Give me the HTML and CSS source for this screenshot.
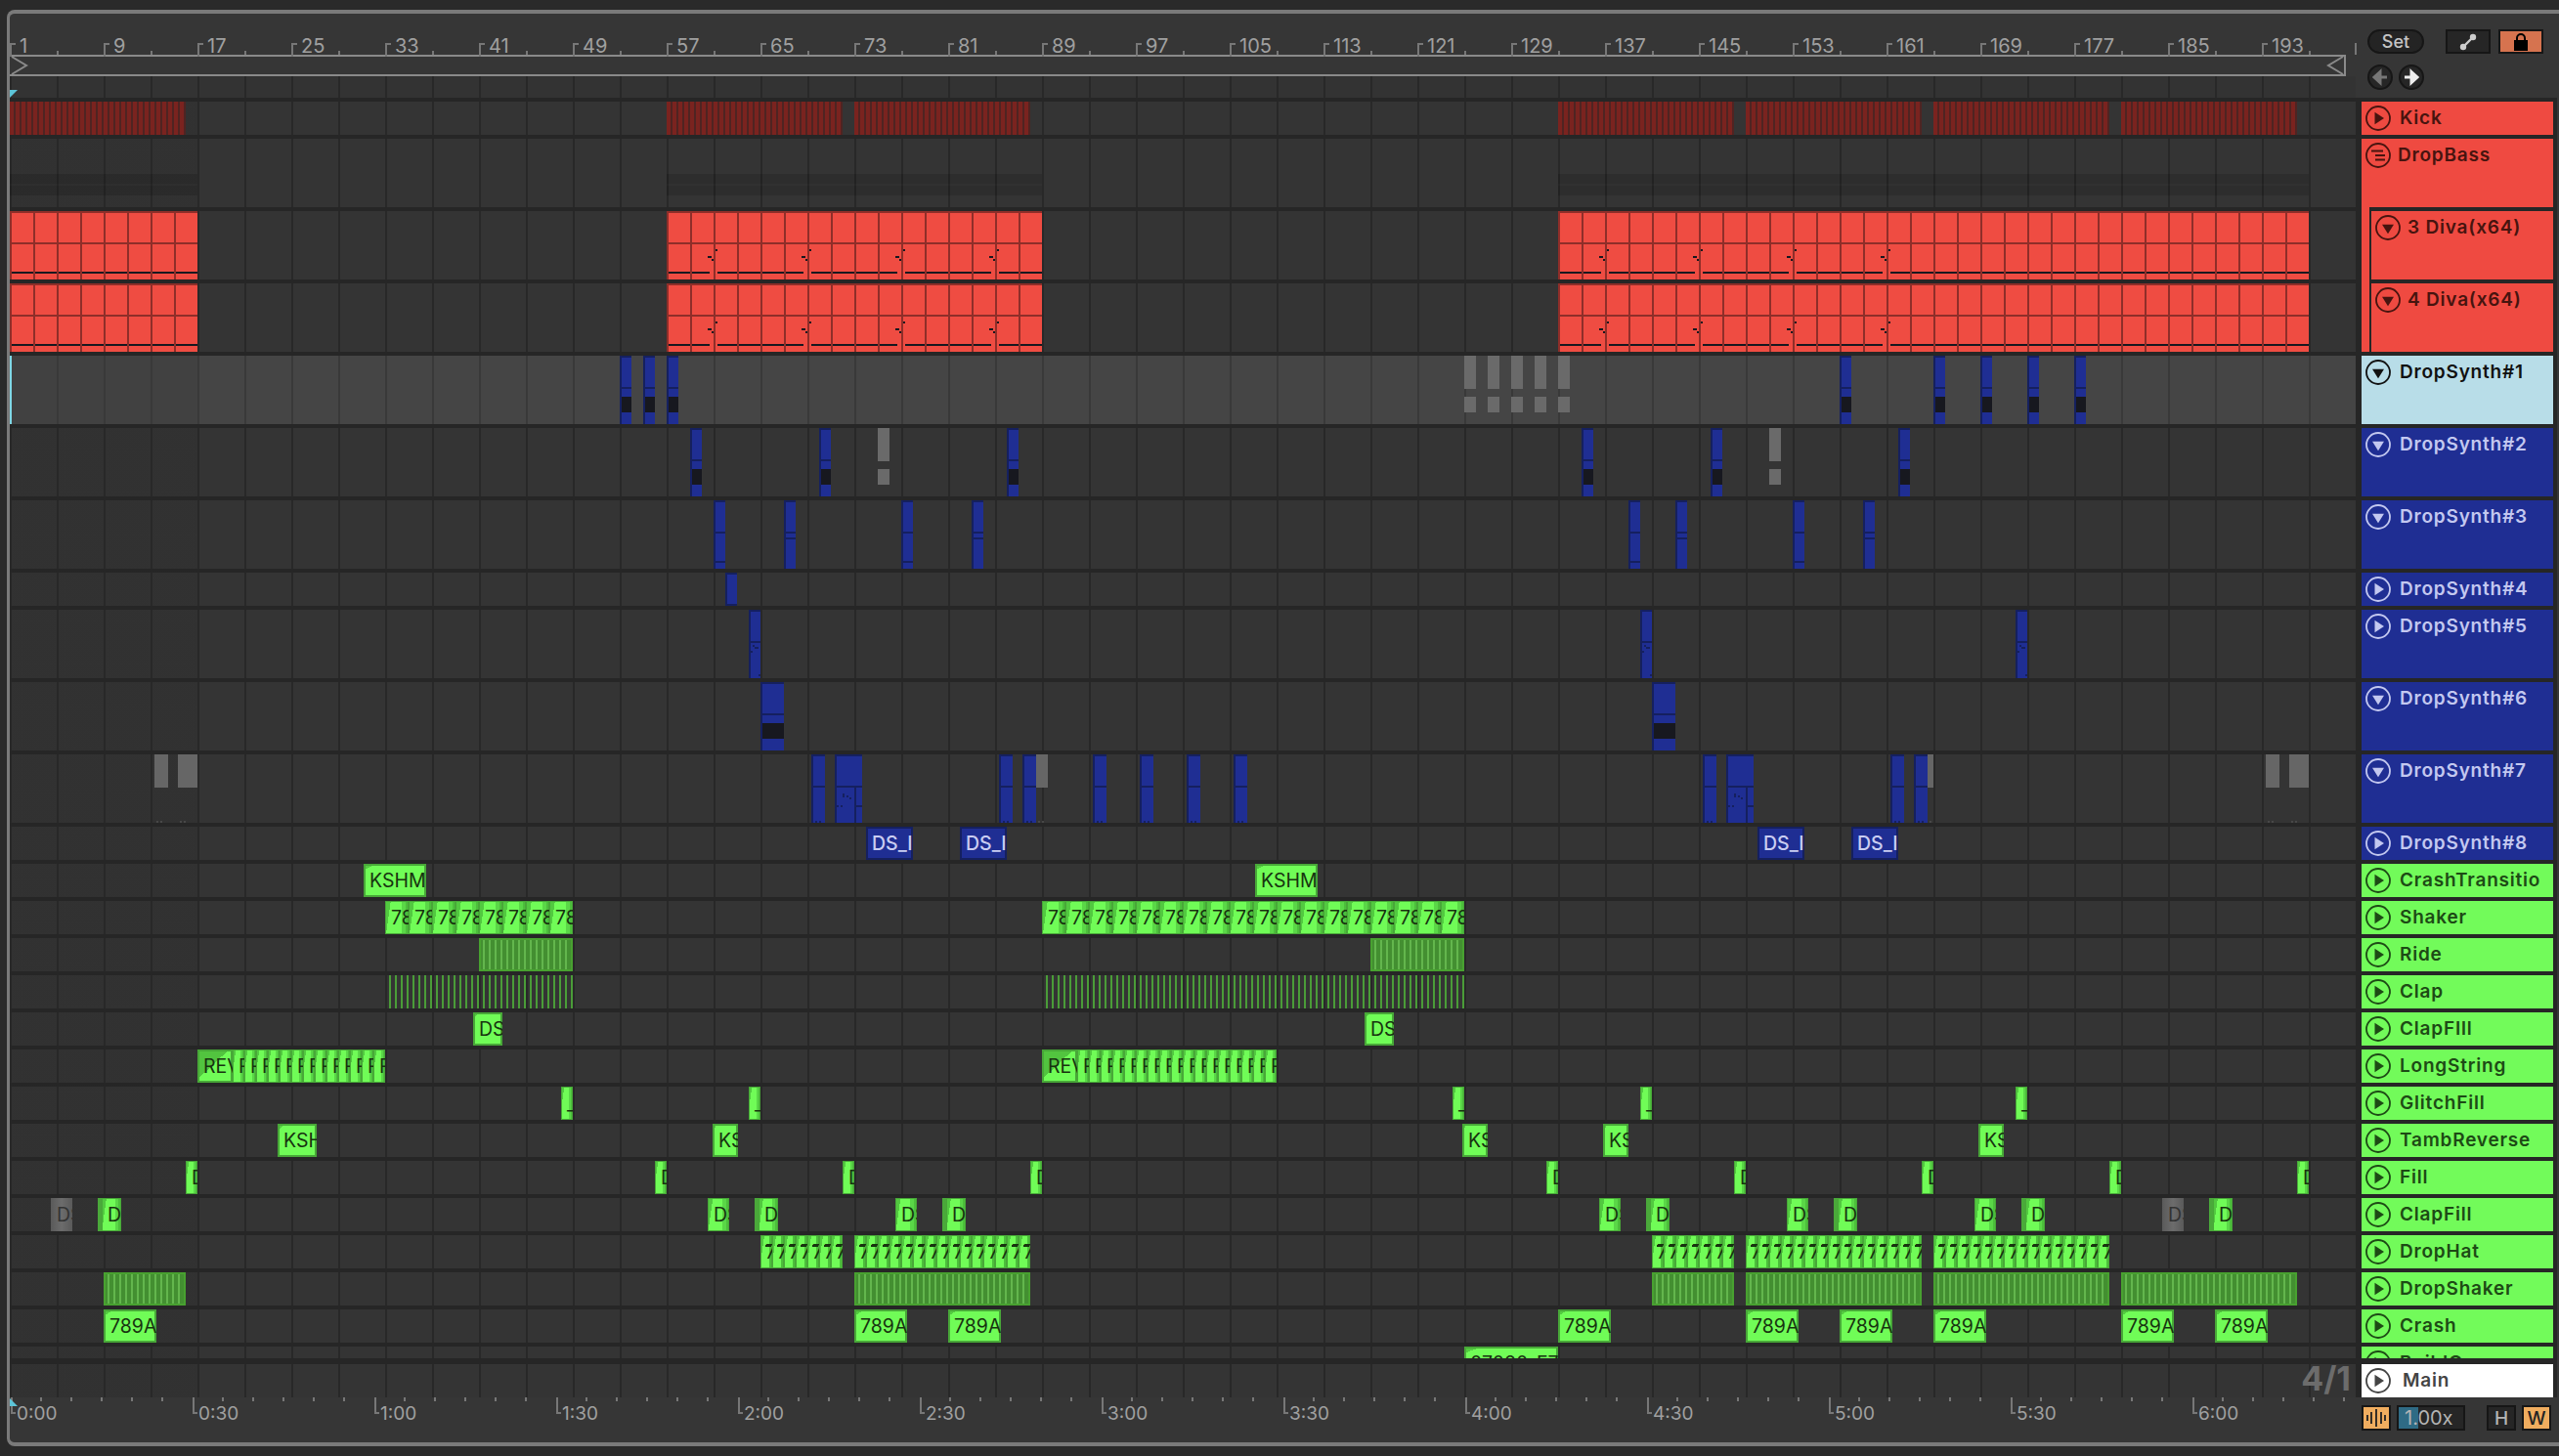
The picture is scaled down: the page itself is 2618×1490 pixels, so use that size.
FILE: index.html
```html
<!DOCTYPE html>
<html lang="en">
<head>
  <meta charset="UTF-8">
  <title>Arrangement View</title>
  <link rel="stylesheet" href="styles.css">
</head>
<body>
  <svg class="sprite">
    <symbol id="i-play" viewBox="0 0 26 26">
      <circle cx="13" cy="13" r="12" fill="none" stroke="currentColor" stroke-width="1.8"/>
      <path d="M9.5 6.8 L19 13 L9.5 19.2 Z" fill="currentColor"/>
    </symbol>
    <symbol id="i-down" viewBox="0 0 26 26">
      <circle cx="13" cy="13" r="12" fill="none" stroke="currentColor" stroke-width="1.8"/>
      <path d="M7 9.7 H19 L13 19.2 Z" fill="currentColor"/>
    </symbol>
    <symbol id="i-fold" viewBox="0 0 26 26">
      <circle cx="13" cy="13" r="12" fill="none" stroke="currentColor" stroke-width="1.8"/>
      <path d="M6 8.5 H18 M10 13 H20 M10 17.5 H20" fill="none" stroke="currentColor" stroke-width="1.8"/>
    </symbol>
  </svg>

  <div class="frame">
    <div class="top">
      <div class="arranger-head">
        <div class="ruler" id="barRuler"></div>
        <div class="loop">
          <svg class="loop-start" width="18" height="20" viewBox="0 0 18 20"><path d="M1 1 L16 10 L1 19" fill="none" stroke="#8a8a8a" stroke-width="2"/></svg>
          <svg class="loop-end" width="18" height="20" viewBox="0 0 18 20"><path d="M17 1 L2 10 L17 19" fill="none" stroke="#8a8a8a" stroke-width="2"/></svg>
        </div>
        <div class="pre-lane"><span class="marker marker-top"></span></div>
      </div>
      <div class="controls">
        <div class="controls-row">
          <button class="pill">Set</button>
          <button class="square first">
            <svg width="20" height="20" viewBox="0 0 20 20"><path d="M5 15 L15 5" stroke="#ccc" stroke-width="2.4"/><circle cx="5" cy="15" r="3.2" fill="#ccc"/><circle cx="15" cy="5" r="3.2" fill="#ccc"/></svg>
          </button>
          <button class="square lock">
            <svg width="20" height="20" viewBox="0 0 20 20"><rect x="3" y="8" width="14" height="11" fill="#000"/><path d="M6 8 V6 a4 4 0 0 1 8 0 V8" fill="none" stroke="#000" stroke-width="2"/></svg>
          </button>
        </div>
        <div class="controls-row nav">
          <button class="round">
            <svg width="18" height="18" viewBox="0 0 18 18"><path d="M16 9 H6 M9 3.5 L3 9 L9 14.5 Z" stroke="#777" stroke-width="3" fill="#777"/></svg>
          </button>
          <button class="round">
            <svg width="18" height="18" viewBox="0 0 18 18"><path d="M2 9 H12 M9 3.5 L15 9 L9 14.5 Z" stroke="#eee" stroke-width="3" fill="#eee"/></svg>
          </button>
        </div>
      </div>
    </div>

    <div class="tracks" id="tracks"></div>

    <div class="track master">
      <div class="lane main-lane"><span class="signature">4/1</span></div>
      <div class="header white">
        <svg class="icon"><use href="#i-play"/></svg>
        <span class="name main-name">Main</span>
      </div>
    </div>

    <div class="bottom">
      <div class="time-ruler" id="timeRuler"><span class="marker marker-bottom"></span></div>
      <div class="footer">
        <button class="foot-btn wave">
          <svg width="22" height="20" viewBox="0 0 22 20"><path d="M2 7 V13 M6 4 V16 M11 1 V19 M16 4 V16 M20 7 V13" stroke="#222" stroke-width="1.8"/></svg>
        </button>
        <div class="zoom-box"><span class="zoom-fill"></span><span class="zoom-text">1.00x</span></div>
        <button class="foot-btn letter first">H</button>
        <button class="foot-btn letter on">W</button>
      </div>
    </div>
  </div>

  <script src="script.js"></script>
</body>
</html>
```

FILE: styles.css
```css
* { box-sizing: border-box; }

body {
  margin: 0;
  width: 2618px;
  height: 1490px;
  padding: 10px 0 0 7px;
  background: #2a2a2a;
  overflow: hidden;
  font-family: "Inter", "Liberation Sans", sans-serif;
}

.sprite { display: none; }

button {
  font-family: inherit;
  padding: 0;
  display: flex;
  align-items: center;
  justify-content: center;
}

/* Outer frame */
.frame {
  width: 2611px;
  height: 1470px;
  border: solid #7a7a7a;
  border-width: 4px 0 4px 3px;
  border-radius: 8px 0 0 8px;
  background: #363636;
  overflow: hidden;
  display: flex;
  flex-direction: column;
}

/* Top: bar ruler, loop brace, controls */
.top {
  display: flex;
  height: 86px;
  flex: none;
}
.arranger-head { width: 2400px; flex: none; }

.ruler {
  display: flex;
  height: 42px;
  position: relative;
}
.ruler::after {
  content: "";
  position: absolute;
  left: 2399px;
  top: 30px;
  width: 2px;
  height: 12px;
  background: #777;
}
.bar-cell {
  width: 96px;
  flex: none;
  position: relative;
  padding: 21px 0 0 10px;
  color: #a0a0a0;
  font-size: 20px;
  line-height: 24px;
}
.bar-cell::before {
  content: "";
  position: absolute;
  left: 0;
  top: 30px;
  width: 4px;
  height: 12px;
  border-left: 2px solid #777;
  border-top: 2px solid #777;
}
.bar-cell::after {
  content: "";
  position: absolute;
  left: 48px;
  top: 38px;
  width: 2px;
  height: 4px;
  background: #777;
}

.loop {
  width: 2390px;
  height: 22px;
  border: solid #8a8a8a;
  border-width: 2px 2px 2px 0;
  display: flex;
  justify-content: space-between;
  align-items: center;
}
.loop-start { margin-left: 1px; }

.pre-lane {
  height: 22px;
  position: relative;
  background:
    repeating-linear-gradient(90deg, #282828 0 2px, transparent 2px 48px),
    #333;
}
.marker {
  position: absolute;
  left: 0;
  width: 8px;
  height: 8px;
  background: #5cc4d8;
}
.marker-top { bottom: 0; clip-path: polygon(0 0, 100% 0, 0 100%); }
.marker-bottom { top: 1px; clip-path: polygon(0 0, 100% 100%, 0 100%); z-index: 2; }

.controls {
  flex: 1;
  padding: 16px 0 0 12px;
  display: flex;
  flex-direction: column;
  gap: 11px;
}
.controls-row { display: flex; }
.nav { gap: 6px; }

.pill {
  width: 58px;
  height: 25px;
  border-radius: 13px;
  border: 2px solid #161616;
  background: #242424;
  color: #c4c4c4;
  font-size: 18px;
  font-weight: 500;
}
.square {
  width: 46px;
  height: 25px;
  border: 2px solid #161616;
  background: #262626;
}
.square.first { margin-left: 22px; }
.square.lock { margin-left: 8px; background: #d6734f; }
.round {
  width: 26px;
  height: 26px;
  border-radius: 50%;
  border: 2px solid #161616;
  background: #262626;
}

/* Track rows */
.tracks {
  width: 2606px;
  height: 1290px;
  flex: none;
  padding-top: 4px;
  background: #262626;
  display: flex;
  flex-direction: column;
  gap: 4px;
  overflow: hidden;
}
.track {
  display: flex;
  gap: 6px;
  flex: none;
  background: #262626;
}
.track.small { height: 34px; }
.track.large { height: 70px; }

.lane {
  width: 2400px;
  flex: none;
  position: relative;
  background:
    repeating-linear-gradient(90deg, #282828 0 2px, transparent 2px 48px),
    linear-gradient(90deg, rgba(0,0,0,0.05) 0 192px, transparent 192px),
    #343434;
}
.lane.selected {
  background:
    repeating-linear-gradient(90deg, #393939 0 2px, transparent 2px 48px),
    linear-gradient(90deg, rgba(0,0,0,0.06) 0 192px, transparent 192px),
    #454545;
  box-shadow: inset 2px 0 0 #7fd8e6;
}

.master {
  width: 2606px;
  height: 40px;
  padding: 6px 0 0;
}
.main-lane {
  display: flex;
  align-items: center;
  justify-content: flex-end;
  padding-right: 5px;
}
.signature {
  color: #6c6c6c;
  font-size: 34px;
  font-weight: 700;
  line-height: 30px;
  margin-top: -4px;
}

/* Track headers */
.header {
  width: 196px;
  flex: none;
  position: relative;
  display: flex;
  align-items: flex-start;
  padding: 4px 0 0 4px;
  overflow: visible;
}
.icon { width: 26px; height: 26px; flex: none; }
.name {
  margin-left: 9px;
  font-size: 19px;
  font-weight: 600;
  letter-spacing: 0.8px;
  line-height: 26px;
  white-space: nowrap;
  overflow: hidden;
}
.header.red { background: #ef4a41; color: #47140f; }
.header.blue { background: #1f2e93; color: #c3c8f0; }
.header.sky { background: #b8dde8; color: #111; }
.header.green { background: #72fb5a; color: #1d4a15; }
.header.white { background: #fff; color: #444; }
.main-name { margin-left: 12px; }
.fold-name { margin-left: 7px; }

.header.nested {
  width: 188px;
  margin-left: 8px;
  border-left: 2px solid #262626;
}
.header.nested .name { margin-left: 7px; }
.header.nested::before {
  content: "";
  position: absolute;
  left: -10px;
  top: -4px;
  bottom: 0;
  width: 8px;
  background: #ef4a41;
}

/* Clips */
.clip {
  position: absolute;
  top: 0;
  height: 100%;
  overflow: hidden;
  white-space: nowrap;
  font-size: 19.5px;
  line-height: 34px;
  padding-left: 6px;
}

.band {
  top: 36px;
  height: 22px;
  background: linear-gradient(rgba(255,255,255,0.02), rgba(255,255,255,0.02)) 0 10px / 100% 2px no-repeat, rgba(0,0,0,0.13);
  padding: 0;
}

.kick {
  background: repeating-linear-gradient(90deg, #7a231f 0 4px, #4f2422 4px 6px);
  padding: 0;
}

.diva {
  background:
    repeating-linear-gradient(90deg, #8f2e29 0 2px, transparent 2px 24px),
    linear-gradient(#8f2e29, #8f2e29) 0 0 / 100% 2px no-repeat,
    linear-gradient(#8f2e29, #8f2e29) 0 32px / 100% 2px no-repeat,
    linear-gradient(#17181f, #17181f) 0 62px / 100% 2px no-repeat,
    #ef4c42;
  padding: 0;
}
.diva.gapped {
  background:
    repeating-linear-gradient(90deg, #8f2e29 0 2px, transparent 2px 24px),
    linear-gradient(#8f2e29, #8f2e29) 0 0 / 100% 2px no-repeat,
    linear-gradient(#8f2e29, #8f2e29) 0 32px / 100% 2px no-repeat,
    repeating-linear-gradient(90deg, transparent 0 42px, #17181f 42px 46px, transparent 46px 96px) 0 46px / 100% 2px no-repeat,
    repeating-linear-gradient(90deg, transparent 0 46px, #17181f 46px 48px, transparent 48px 96px) 0 49px / 100% 2px no-repeat,
    repeating-linear-gradient(90deg, transparent 0 50px, #17181f 50px 52px, transparent 52px 96px) 0 39px / 100% 2px no-repeat,
    repeating-linear-gradient(90deg, #17181f 0 44px, #ef4c42 44px 52px, #17181f 52px 96px) 0 62px / 100% 2px no-repeat,
    #ef4c42;
}

.ds {
  background: #1f2e93;
  box-shadow: inset 2px 2px 0 #15205f;
  padding: 0;
}
.ds.line {
  background:
    linear-gradient(#15205f, #15205f) 0 32px / 100% 2px no-repeat,
    #1f2e93;
}
.ds.hook {
  background:
    linear-gradient(#15205f, #15205f) 0 32px / 100% 2px no-repeat,
    linear-gradient(#17181f, #17181f) 0 42px / 100% 16px no-repeat,
    #1f2e93;
}
.ds.split {
  background:
    linear-gradient(#15205f, #15205f) 0 32px / 100% 2px no-repeat,
    linear-gradient(#15205f, #15205f) 0 62px / 100% 2px no-repeat,
    #1f2e93;
}
.ds.twin {
  background:
    linear-gradient(#15205f, #15205f) 0 32px / 100% 2px no-repeat,
    linear-gradient(#15205f, #15205f) 0 38px / 100% 2px no-repeat,
    #1f2e93;
}
.ds.capped { box-shadow: inset 2px 2px 0 #15205f, inset 0 -2px 0 #15205f; }
.ds.specks {
  background:
    linear-gradient(#15205f, #15205f) 0 32px / 100% 2px no-repeat,
    linear-gradient(#15205f, #15205f) 4px 36px / 2px 2px no-repeat,
    linear-gradient(#15205f, #15205f) 6px 38px / 4px 2px no-repeat,
    linear-gradient(#15205f, #15205f) 2px 42px / 2px 2px no-repeat,
    linear-gradient(#15205f, #15205f) 10px 66px / 2px 2px no-repeat,
    #1f2e93;
}
.ds.dotted {
  background:
    linear-gradient(#15205f, #15205f) 0 32px / 100% 2px no-repeat,
    linear-gradient(#15205f, #15205f) 4px 68px / 2px 2px no-repeat,
    linear-gradient(#15205f, #15205f) 8px 68px / 2px 2px no-repeat,
    #1f2e93;
}
.ds.wide {
  background:
    linear-gradient(#15205f, #15205f) 20px 32px / 2px 100% no-repeat,
    linear-gradient(#15205f, #15205f) 0 32px / 100% 2px no-repeat,
    linear-gradient(#15205f, #15205f) 22px 52px / 6px 2px no-repeat,
    linear-gradient(#15205f, #15205f) 8px 40px / 2px 4px no-repeat,
    linear-gradient(#15205f, #15205f) 12px 42px / 2px 2px no-repeat,
    linear-gradient(#15205f, #15205f) 15px 44px / 2px 2px no-repeat,
    linear-gradient(#15205f, #15205f) 2px 52px / 2px 2px no-repeat,
    linear-gradient(#15205f, #15205f) 6px 52px / 2px 2px no-repeat,
    #1f2e93;
}
.ds.label {
  box-shadow: inset 0 0 0 2px #15205f;
  color: #c9cdf2;
  padding-left: 6px;
  font-weight: 500;
}

.ghost {
  background:
    linear-gradient(#6a6a6a, #6a6a6a) 0 0 / 100% 34px no-repeat,
    linear-gradient(#6a6a6a, #6a6a6a) 0 42px / 100% 16px no-repeat;
  padding: 0;
}
.ghost.top-only {
  background:
    linear-gradient(#666, #666) 0 0 / 100% 34px no-repeat,
    linear-gradient(#484848, #484848) 2px 68px / 2px 2px no-repeat,
    linear-gradient(#484848, #484848) 6px 68px / 2px 2px no-repeat;
}

.lit {
  background:
    linear-gradient(to bottom right, #54cc41 0 10%, transparent 10%),
    #70fc57;
  box-shadow: inset 0 0 0 2px #48a838;
  color: #17330f;
}
.lit.short {
  background:
    linear-gradient(98deg, #52c940 0 20%, transparent 20%),
    linear-gradient(90deg, transparent 70%, #5ad747 70% 86%, #4cbf3b 86%),
    #70fc57;
  box-shadow: inset 0 0 0 1px #48a838;
}
.lit.rev {
  background: linear-gradient(to bottom right, #52c43f 0 45%, #70fc57 45%);
  box-shadow: inset 0 0 0 2px #48a838;
}
.lit.sliver {
  background: #4aa93a;
  padding: 0;
  box-shadow: none;
}
.lit.hat {
  background:
    linear-gradient(#17330f, #17330f) 5px 10px / 6px 2px no-repeat,
    linear-gradient(98deg, #52c940 0 24%, transparent 24%),
    linear-gradient(90deg, transparent 74%, #4cbf3b 74%),
    #70fc57;
  box-shadow: inset 0 0 0 1px #48a838;
  padding-left: 5px;
}
.muted {
  background: linear-gradient(90deg, #5a5a5a, #6c6c6c 50%, #5a5a5a);
  color: #333;
}

.stripes {
  background: repeating-linear-gradient(90deg, #438f31 0 4px, #63b64d 4px 6px);
  box-shadow: inset 0 0 0 2px #48a130;
  padding: 0;
}
.ticks {
  background: repeating-linear-gradient(90deg, transparent 0 4px, #4a9c38 4px 6px);
  padding: 0;
}

/* Bottom: time ruler and view buttons */
.bottom {
  display: flex;
  flex: 1;
}
.time-ruler {
  width: 2400px;
  flex: none;
  display: flex;
  position: relative;
  overflow: hidden;
}
.time-cell {
  width: 186px;
  flex: none;
  height: 42px;
  padding: 6px 0 0 7px;
  color: #a0a0a0;
  font-size: 19px;
  line-height: 22px;
  background: repeating-linear-gradient(90deg, #777 0 2px, transparent 2px 31px) 31px 0 / 100% 4px no-repeat;
  position: relative;
}
.time-cell::before {
  content: "";
  position: absolute;
  left: 1px;
  top: 0;
  width: 3px;
  height: 15px;
  border-left: 2px solid #777;
  border-bottom: 2px solid #777;
}
.footer {
  flex: 1;
  display: flex;
  padding: 8px 0 0 6px;
  gap: 6px;
  align-items: flex-start;
}
.foot-btn {
  width: 30px;
  height: 26px;
  border: 2px solid #161616;
  background: #f0ad5f;
  color: #222;
}
.zoom-box {
  width: 70px;
  height: 26px;
  border: 2px solid #161616;
  background: #262626;
  position: relative;
  color: #b4b4b4;
  font-size: 20px;
  line-height: 22px;
  padding-left: 6px;
}
.zoom-fill {
  position: absolute;
  left: 0;
  top: 0;
  bottom: 0;
  width: 20px;
  background: #2f6b85;
}
.zoom-text { position: relative; }
.letter { font-size: 19px; font-weight: 500; }
.letter.first {
  margin-left: 16px;
  background: #262626;
  color: #b4b4b4;
}
```

FILE: script.js
```js
// Every clip position is in lane pixels: one bar is 12px
const at = (xs, w, cls, text) => xs.map(x => ({ x, w, cls, text }));

function run(x, count, w, cls, text) {
  const out = [];
  for (let i = 0; i < count; i++) out.push({ x: x + i * w, w, cls, text });
  return out;
}

// A short clap hit with the sliver of the previous clip in front of it
const pair = xs => xs.flatMap(x => [
  { x, w: 4, cls: 'lit sliver' },
  { x: x + 4, w: 20, cls: 'lit short', text: 'D' }
]);

const divaClips = [
  { x: 0, w: 192, cls: 'diva' },
  { x: 672, w: 384, cls: 'diva gapped' },
  { x: 1584, w: 384, cls: 'diva gapped' },
  { x: 1968, w: 384, cls: 'diva' }
];

const tracks = [
  { name: 'Kick', tone: 'red', size: 'small',
    clips: at([0, 672, 864, 1584, 1776, 1968, 2160], 180, 'kick') },
  { name: 'DropBass', tone: 'red', size: 'large', icon: 'fold',
    clips: at([0], 192, 'band').concat(at([672], 384, 'band'), at([1584], 768, 'band')) },
  { name: '3 Diva(x64)', tone: 'red', size: 'large', icon: 'down', nested: true, clips: divaClips },
  { name: '4 Diva(x64)', tone: 'red', size: 'large', icon: 'down', nested: true, clips: divaClips },
  { name: 'DropSynth#1', tone: 'sky', size: 'large', icon: 'down', selected: true,
    clips: [].concat(
      at([624, 648, 672, 1872, 1968, 2016, 2064, 2112], 12, 'ds hook'),
      at([1488, 1512, 1536, 1560, 1584], 12, 'ghost')) },
  { name: 'DropSynth#2', tone: 'blue', size: 'large', icon: 'down',
    clips: [].concat(
      at([696, 828, 1020, 1608, 1740, 1932], 12, 'ds hook'),
      at([888, 1800], 12, 'ghost')) },
  { name: 'DropSynth#3', tone: 'blue', size: 'large', icon: 'down',
    clips: [].concat(
      at([720, 912, 1656, 1824], 12, 'ds split'),
      at([792, 984, 1704, 1896], 12, 'ds twin')) },
  { name: 'DropSynth#4', tone: 'blue', size: 'small', clips: at([732], 12, 'ds capped') },
  { name: 'DropSynth#5', tone: 'blue', size: 'large', clips: at([756, 1668, 2052], 12, 'ds specks') },
  { name: 'DropSynth#6', tone: 'blue', size: 'large', icon: 'down',
    clips: at([768, 1680], 24, 'ds hook') },
  { name: 'DropSynth#7', tone: 'blue', size: 'large', icon: 'down',
    clips: [].concat(
      at([820, 1012, 1036, 1108, 1156, 1204, 1252, 1732, 1924, 1948], 14, 'ds dotted'),
      at([844, 1756], 28, 'ds wide'),
      at([1050], 12, 'ghost top-only'),
      at([1962], 6, 'ghost top-only'),
      at([148, 2308], 14, 'ghost top-only'),
      at([172, 2332], 20, 'ghost top-only')) },
  { name: 'DropSynth#8', tone: 'blue', size: 'small',
    clips: at([876, 972, 1788, 1884], 48, 'ds label', 'DS_I') },
  { name: 'CrashTransitio', tone: 'green', size: 'small',
    clips: at([362, 1274], 64, 'lit', 'KSHM') },
  { name: 'Shaker', tone: 'green', size: 'small',
    clips: run(384, 8, 24, 'lit short', '78').concat(run(1056, 18, 24, 'lit short', '78')) },
  { name: 'Ride', tone: 'green', size: 'small', clips: at([480, 1392], 96, 'stripes') },
  { name: 'Clap', tone: 'green', size: 'small',
    clips: [{ x: 384, w: 192, cls: 'ticks' }, { x: 1056, w: 432, cls: 'ticks' }] },
  { name: 'ClapFIll', tone: 'green', size: 'small', clips: at([474, 1386], 30, 'lit', 'DS') },
  { name: 'LongString', tone: 'green', size: 'small',
    clips: [].concat(
      at([192, 1056], 36, 'lit rev', 'REV'),
      run(228, 13, 12, 'lit short', 'R'),
      run(1092, 17, 12, 'lit short', 'R')) },
  { name: 'GlitchFill', tone: 'green', size: 'small',
    clips: at([564, 756, 1476, 1668, 2052], 12, 'lit short', '_') },
  { name: 'TambReverse', tone: 'green', size: 'small',
    clips: at([274], 40, 'lit', 'KSH').concat(at([719, 1486, 1630, 2014], 26, 'lit', 'KS')) },
  { name: 'Fill', tone: 'green', size: 'small',
    clips: at([180, 660, 852, 1044, 1572, 1764, 1956, 2148, 2340], 12, 'lit short', 'D') },
  { name: 'ClapFill', tone: 'green', size: 'small',
    clips: [].concat(
      at([42, 2202], 22, 'muted', 'DS'),
      at([714, 906, 1626, 1818, 2010], 22, 'lit short', 'DS'),
      pair([90, 762, 954, 1674, 1866, 2058, 2250])) },
  { name: 'DropHat', tone: 'green', size: 'small',
    clips: [].concat(
      run(768, 7, 12, 'lit hat', '7'),
      run(864, 15, 12, 'lit hat', '7'),
      run(1680, 7, 12, 'lit hat', '7'),
      run(1776, 15, 12, 'lit hat', '7'),
      run(1968, 15, 12, 'lit hat', '7')) },
  { name: 'DropShaker', tone: 'green', size: 'small',
    clips: at([96, 1680], 84, 'stripes').concat(at([864, 1776, 1968, 2160], 180, 'stripes')) },
  { name: 'Crash', tone: 'green', size: 'small',
    clips: at([96, 864, 960, 1584, 1776, 1872, 1968, 2160, 2256], 54, 'lit', '789A') },
  { name: 'BuildO', tone: 'green', size: 'small',
    clips: at([1488], 96, 'lit', '07080_F7') }
];

function buildTrack(track) {
  const row = document.createElement('div');
  row.className = 'track ' + track.size;

  const lane = document.createElement('div');
  lane.className = track.selected ? 'lane selected' : 'lane';
  track.clips.forEach(c => {
    const el = document.createElement('div');
    el.className = 'clip ' + c.cls;
    el.style.left = c.x + 'px';
    el.style.width = c.w + 'px';
    if (c.text) el.textContent = c.text;
    lane.appendChild(el);
  });

  const icon = track.icon || 'play';
  const head = document.createElement('div');
  head.className = 'header ' + track.tone + (track.nested ? ' nested' : '');
  head.innerHTML = '<svg class="icon"><use href="#i-' + icon + '"/></svg>' +
    '<span class="name' + (icon === 'fold' ? ' fold-name' : '') + '">' + track.name + '</span>';

  row.appendChild(lane);
  row.appendChild(head);
  return row;
}

const tracksEl = document.getElementById('tracks');
tracks.forEach(t => tracksEl.appendChild(buildTrack(t)));

// Bar numbers, one label every 8 bars
const barRuler = document.getElementById('barRuler');
for (let b = 1; b <= 193; b += 8) {
  const cell = document.createElement('div');
  cell.className = 'bar-cell';
  cell.textContent = b;
  barRuler.appendChild(cell);
}

// Time labels, one every 30 seconds
const timeRuler = document.getElementById('timeRuler');
for (let s = 0; s <= 360; s += 30) {
  const cell = document.createElement('div');
  cell.className = 'time-cell';
  cell.textContent = Math.floor(s / 60) + ':' + String(s % 60).padStart(2, '0');
  timeRuler.appendChild(cell);
}
```
